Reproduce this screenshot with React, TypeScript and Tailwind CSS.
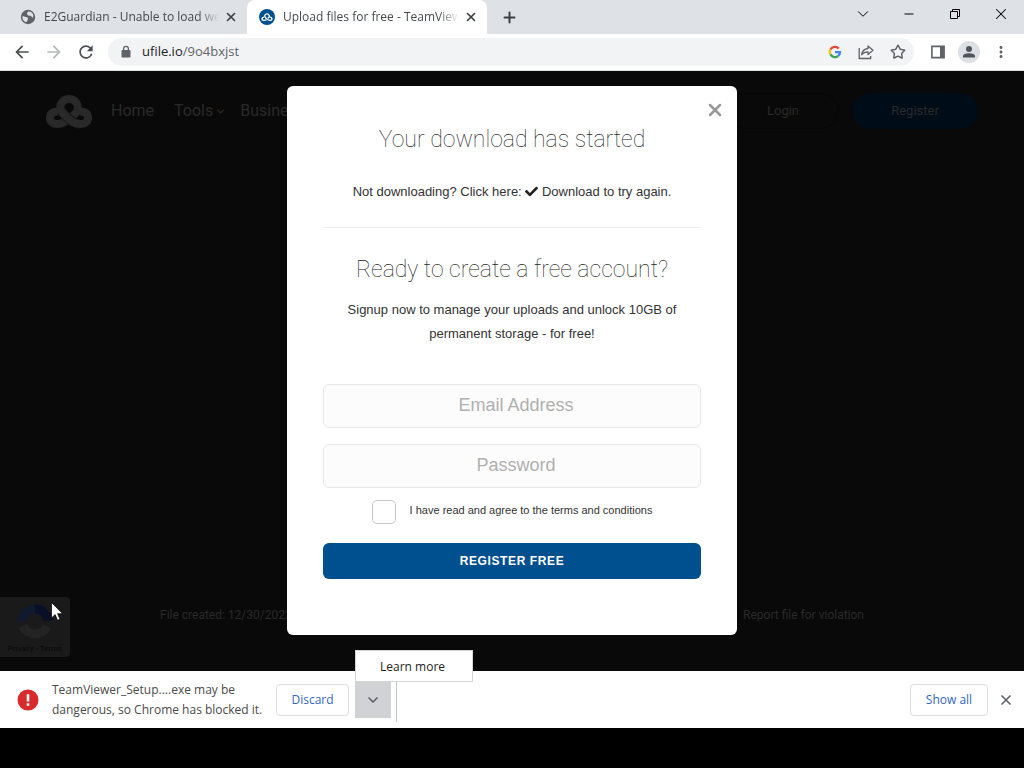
import type { ReactNode } from "react";
import { ChevronDown, Minus, Plus, Star, X } from "lucide-react";
import { MdArrowBack, MdArrowForward, MdMoreVert, MdRefresh } from "react-icons/md";
import { FaCheck } from "react-icons/fa";

const ui = "font-['Open_Sans',sans-serif]";

function KnotLogo({ className, stroke, gap }: { className: string; stroke: number; gap: string }) {
  const over = "M31 18C32 16 32 14 31.500 12A9 9 0 0 0 14.500 12C13.500 16 15 19 20 23.500C25 28 28 31 34 31C39 31 42 28.500 42 25C42 20 38 18 33 18.500";
  return (
    <svg viewBox="0 0 46 36" className={className} fill="none" stroke="currentColor" strokeWidth={stroke} aria-hidden="true">
      <path d="M13 18.500C8 18 4 20 4 25C4 28.500 7 31 12 31C18 31 22 27 26 23.500C29 21 30.500 19.500 31 17.500" />
      <path d="M15.500 18C17 20.500 20 23.500 23 26C26 28.500 29 31 34 31" stroke={gap} strokeWidth={stroke + 1.6} />
      <path d={over} />
    </svg>
  );
}

function GlobeIcon() {
  return (
    <svg viewBox="0 0 16 16" className="size-4" aria-hidden="true">
      <circle cx="8" cy="8" r="7.200" fill="#5f6368" />
      <path d="M2.600 6.800C4 8 6 7.600 7.400 8.600C8.400 9.400 8 10.600 7.400 11.400C7 12.400 6.400 13.600 5.400 13C2.800 11.600 1.900 9.200 2.600 6.800Z" fill="#dee1e6" />
      <path d="M8 2.800C9.500 2 11.500 3 12.600 4.500C13.700 6 13.700 7.800 12.400 8.800C11.500 8.200 11.600 7 10.400 6.800C9 6.600 7.400 6.400 7.200 5.200C7.100 4.300 7.300 3.400 8 2.800Z" fill="#dee1e6" />
    </svg>
  );
}

function GoogleIcon() {
  return (
    <svg viewBox="0 0 14 14" className="size-3.5" fill="none" strokeWidth="2.300" aria-hidden="true">
      <path d="M2.500 4.400A5 5 0 0 1 10.700 3.600" stroke="#ea4335" />
      <path d="M2.500 9.400A5 5 0 0 1 2.500 4.400" stroke="#fbbc05" />
      <path d="M10.200 10.900A5 5 0 0 1 2.500 9.400" stroke="#34a853" />
      <path d="M7 7.100H12A5 5 0 0 1 10.200 10.900" stroke="#4285f4" />
    </svg>
  );
}

function Tab({ title, icon, active }: { title: string; icon: ReactNode; active?: boolean }) {
  return (
    <div className={active ? "flex w-60 min-w-0 items-center rounded-t-lg bg-white pl-3 pr-2" : "flex w-[247px] min-w-0 items-center pl-5 pr-2"}>
      <span className="mr-2 shrink-0">{icon}</span>
      <span className="mr-1 min-w-0 flex-1 overflow-hidden whitespace-nowrap text-[12px] text-[#45484c] [mask-image:linear-gradient(to_right,#000_88%,transparent)]">
        {title}
      </span>
      <button aria-label="Close tab" className="grid size-4 place-items-center text-[#3c4043]">
        <X size={14} strokeWidth={2.8} />
      </button>
    </div>
  );
}

function BrowserChrome() {
  return (
    <header className={ui}>
      <div className="flex h-[34px] bg-[#dee1e6]">
        <Tab title="E2Guardian - Unable to load web" icon={<GlobeIcon />} />
        <Tab
          active
          title="Upload files for free - TeamViewer"
          icon={
            <span className="grid size-4 place-items-center rounded-full bg-[#00508f] text-white">
              <KnotLogo className="h-2.5 w-3" stroke={5} gap="#00508f" />
            </span>
          }
        />
        <button aria-label="New tab" className="grid w-11 place-items-center text-[#3c4043]">
          <Plus size={17} strokeWidth={2.8} />
        </button>
        <div className="ml-auto flex text-black">
          <button aria-label="Search tabs" className="grid w-[46px] place-items-center pb-1.5">
            <ChevronDown size={18} strokeWidth={1.3} />
          </button>
          <button aria-label="Minimize" className="grid w-[46px] place-items-center pb-1.5">
            <Minus size={14} strokeWidth={1.7} />
          </button>
          <button aria-label="Restore" className="grid w-[46px] place-items-center pb-1.5">
            <svg viewBox="0 0 12 12" className="size-3" fill="none" stroke="currentColor">
              <path d="M1.500 3.500h7v7h-7zM3.500 3.500v-2h7v7h-2" />
            </svg>
          </button>
          <button aria-label="Close window" className="grid w-[46px] place-items-center pb-1.5">
            <X size={18} strokeWidth={1.4} />
          </button>
        </div>
      </div>
      <div className="flex h-[37px] items-center border-b border-[#dcdfde] bg-white text-[#5f6368]">
        <div className="flex gap-3 pl-3">
          <button aria-label="Back" className="text-[#4a4d51]"><MdArrowBack size={20} /></button>
          <button aria-label="Forward" className="text-[#b4b6b8]"><MdArrowForward size={20} /></button>
          <button aria-label="Reload" className="text-[#4a4d51]"><MdRefresh size={20} /></button>
        </div>
        <div className="ml-3 flex h-7 flex-1 items-center rounded-full bg-[#f1f3f4] pl-3 pr-2">
          <svg viewBox="0 0 12 14" className="h-3.5 w-3 shrink-0" aria-hidden="true">
            <rect x="1.500" y="5" width="9" height="7.500" rx="1" fill="currentColor" />
            <path d="M3.600 5.500V3.700a2.400 2.400 0 0 1 4.800 0v1.800" fill="none" stroke="currentColor" strokeWidth="1.300" />
          </svg>
          <p className="ml-2.5 flex-1 text-[13px] text-[#5f6368]">
            <span className="text-[#202124]">ufile.io</span>/9o4bxjst
          </p>
          <div className="flex items-center gap-4">
            <button aria-label="Search with Google"><GoogleIcon /></button>
            <button aria-label="Share">
              <svg viewBox="0 0 16 16" className="size-4" fill="none" stroke="currentColor" strokeWidth="1.300" strokeLinejoin="round">
                <path d="M1.200 4v10.500h11.500v-2.500M10 2l5 4.300l-5 4.200v-2.600c-3 0-4.800.8-6.300 2.800c.4-3.600 2.600-5.800 6.300-6.200z" />
              </svg>
            </button>
            <button aria-label="Bookmark"><Star size={16} strokeWidth={2.2} /></button>
          </div>
        </div>
        <div className="flex items-center gap-3 px-4 pr-3.5">
          <button aria-label="Side panel">
            <svg viewBox="0 0 16 16" className="size-4">
              <path d="M1.900 2.400h12.200v11.200H1.900z" fill="none" stroke="currentColor" strokeWidth="1.600" />
              <path d="M10 2h4v12h-4z" fill="currentColor" />
            </svg>
          </button>
          <button aria-label="Profile" className="grid size-[22px] place-items-center rounded-full bg-[#dcdfe5] text-[#50555c]">
            <svg viewBox="0 0 14 14" className="size-3.5" fill="currentColor">
              <circle cx="7" cy="4" r="3" />
              <path d="M1 12.500V11C1 9 4.500 8.200 7 8.200S13 9 13 11v1.500z" />
            </svg>
          </button>
          <button aria-label="Menu"><MdMoreVert size={18} /></button>
        </div>
      </div>
    </header>
  );
}

function DimmedSite() {
  return (
    <div className="relative col-start-1 row-start-1 flex flex-col justify-between overflow-hidden font-[Roboto,sans-serif] text-[#2a2a2a]">
      <div className="flex items-center justify-between px-[46px] pt-[22px]">
        <div className="flex items-center">
          <KnotLogo className="h-9 w-[46px] text-[#292929]" stroke={8} gap="#141414" />
          <nav className="ml-[19px] flex text-[16px]">
            <a href="#home">Home</a>
            <a href="#tools" className="ml-5 flex items-center gap-0.5">
              Tools <ChevronDown size={11} strokeWidth={3} />
            </a>
            <a href="#business" className="ml-3.5">Business</a>
          </nav>
        </div>
        <div className="flex items-center text-[13px]">
          <a href="#login" className="grid h-9 w-[110px] place-items-center rounded-full border border-[#060606]">Login</a>
          <a href="#register" className="ml-3.5 grid h-9 w-[126px] place-items-center rounded-full bg-[#000c17]">Register</a>
        </div>
      </div>
      <div className="flex justify-between px-40 pb-[46px] text-[12px] leading-5">
        <p>File created: 12/30/2022</p>
        <a href="#report">Report file for violation</a>
      </div>
      <div className="absolute bottom-[14px] left-0 flex h-[60px] w-[70px] flex-col items-center justify-between rounded-r-sm bg-[#1a1a1a] pb-1 pt-1">
        <svg viewBox="0 0 40 40" className="size-10" fill="none" strokeWidth="9" aria-hidden="true">
          <path d="M7 21A13 13 0 0 1 20 8" stroke="#101a2e" />
          <path d="M20 8A13 13 0 0 1 33 20" stroke="#090f26" />
          <path d="M32 25A13 13 0 0 1 8 25" stroke="#232323" />
        </svg>
        <span className="text-[8px] leading-none text-[#080808]">Privacy - Terms</span>
      </div>
      <svg viewBox="0 0 12 19" className="absolute bottom-[50px] left-[51px] h-[19px] w-3" aria-hidden="true">
        <path d="M.5.5v15.500l3.600-3.400l2.500 5.700l2.400-1l-2.400-5.600h5z" fill="#fff" stroke="#000" strokeWidth=".7" />
      </svg>
    </div>
  );
}

function DownloadDialog() {
  const field = "h-11 w-full rounded-md border border-[#e8e8e8] bg-[#fcfcfc] pl-4 pr-2 pb-0.5 text-center text-[18px] text-[#444] placeholder:text-[#b0b0b0]";
  const heading = "font-[Roboto,sans-serif] text-[23px] font-thin leading-9 text-[#222]";
  return (
    <div className="z-10 col-start-1 row-start-1 flex items-start justify-center pb-9 pt-[15px]">
      <section
        role="dialog"
        aria-label="Your download has started"
        className="relative flex w-full max-w-[450px] flex-col rounded-md bg-white px-9 pb-14 pt-9 text-center font-['Liberation_Sans',sans-serif] text-[13px] text-[#333]"
      >
        <button aria-label="Close" className="absolute right-3 top-3.5 text-[#999]">
          <X size={20} strokeWidth={3} />
        </button>
        <h2 className={heading}>Your download has started</h2>
        <p className="mt-[22px] leading-6">
          Not downloading? Click here:{" "}
          <a href="#download">
            <FaCheck className="inline align-[-2px] text-[#222]" size={13} /> Download
          </a>{" "}
          to try again.
        </p>
        <hr className="mt-[23px] border-[#eee]" />
        <h2 className={"mt-6 " + heading}>Ready to create a free account?</h2>
        <p className="mt-[10px] px-5 leading-6">Signup now to manage your uploads and unlock 10GB of permanent storage - for free!</p>
        <form className="mt-[38px] flex flex-col">
          <input type="email" aria-label="Email Address" placeholder="Email Address" className={field} />
          <input type="password" aria-label="Password" placeholder="Password" className={field + " mt-4"} />
          <label className="mt-3 flex items-start justify-center gap-3.5 text-[11px]">
            <input type="checkbox" className="size-6 appearance-none rounded-[5px] border border-[#c8c8c8] bg-white" />
            <span className="leading-5">I have read and agree to the terms and conditions</span>
          </label>
          <button type="button" className="mt-[19px] h-9 rounded-md bg-[#00508f] text-[12px] font-bold tracking-wider text-white">
            REGISTER FREE
          </button>
        </form>
      </section>
    </div>
  );
}

function DownloadBar() {
  const button = "h-8 rounded border border-[#dadce0] bg-white text-[12px] font-medium text-[#3367c0]";
  return (
    <footer className={"flex h-[57px] items-center bg-white pl-4 pr-2.5 text-[#4a4a4a] " + ui}>
      <svg viewBox="0 0 24 24" className="size-6 shrink-0" aria-hidden="true">
        <circle cx="12" cy="12" r="10.500" fill="#d92b2b" />
        <path d="M10.700 6.200h2.600v7.400h-2.600zM10.700 15.200h2.600v2.600h-2.600z" fill="#fff" />
      </svg>
      <p className="ml-3 w-[220px] text-[12px] leading-5">
        TeamViewer_Setup....exe may be
        <br />
        dangerous, so Chrome has blocked it.
      </p>
      <button className={button + " ml-1 w-[73px]"}>Discard</button>
      <div className="relative ml-1.5 self-start pt-2.5">
        <button aria-label="More options" className="grid h-[37px] w-9 place-items-center bg-[#d0d2d5] text-[#5f6368]">
          <ChevronDown size={16} strokeWidth={2.5} />
        </button>
        <div role="menu" className="absolute bottom-[36px] left-0 z-20 w-[118px] border border-[#d5d5d5] bg-white">
          <button role="menuitem" className="h-[30px] w-full pl-6 pt-0.5 text-left text-[12px] text-[#222]">Learn more</button>
        </div>
      </div>
      <div className="mb-1.5 ml-[5px] h-10 w-px self-end bg-[#c4c4c4]" />
      <button className={button + " ml-auto w-[78px]"}>Show all</button>
      <button aria-label="Close downloads bar" className="ml-2.5 text-[#5f6368]">
        <X size={16} strokeWidth={2.5} />
      </button>
    </footer>
  );
}

export default function App() {
  return (
    <div className="flex min-h-screen flex-col bg-black pb-10">
      <BrowserChrome />
      <main className="grid flex-1 bg-[#090909]">
        <DimmedSite />
        <DownloadDialog />
      </main>
      <DownloadBar />
    </div>
  );
}
